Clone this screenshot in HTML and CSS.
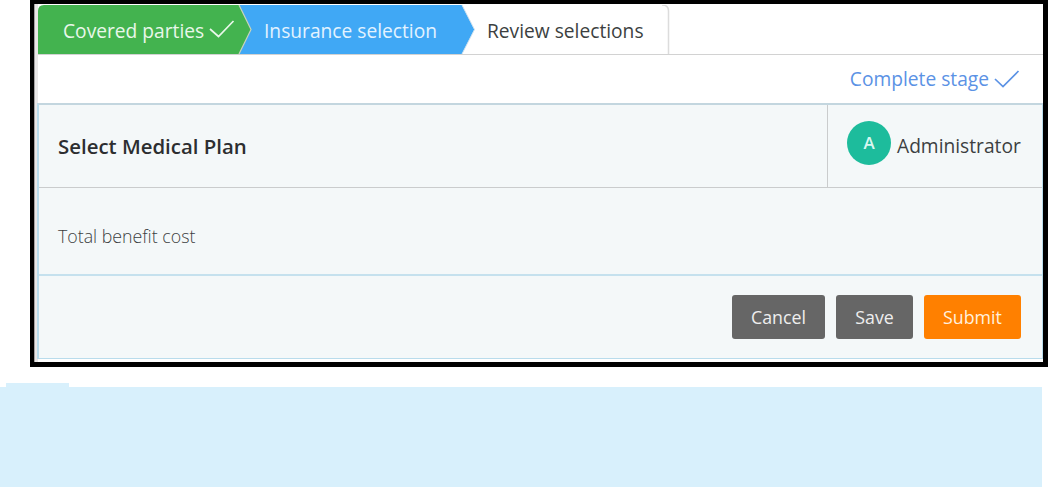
FILE: index.html
```html
<!DOCTYPE html>
<html lang="en">
<head>
    <meta charset="UTF-8">
    <meta name="viewport" content="width=device-width, initial-scale=1.0">
    <title>Select Medical Plan</title>
    <link rel="stylesheet" href="styles.css">
</head>
<body>
    <div class="case">
        <div class="stages">
            <svg class="stages-bg" width="1004" height="49" viewBox="0 0 1004 49">
                <path d="M200 0H424L436.500 24.500L424 49H200Z" fill="#40a8f5"/>
                <path d="M0 49V6Q0 0 6 0H201L213 24.500L201 49Z" fill="#43b34f"/>
                <path d="M201 0L213 24.500L201 49" fill="none" stroke="#c9d3bb" stroke-width="1.200"/>
                <path d="M424 0L436.500 24.500L424 49" fill="none" stroke="#d5e4ee" stroke-width="1"/>
                <path d="M624 0Q630.500 0 630.500 6V49" fill="none" stroke="#dcdcdc" stroke-width="1.500"/>
            </svg>
            <div class="stage stage-done">
                <span>Covered parties</span>
                <svg class="check" width="26" height="18" viewBox="0 0 26 18"><path d="M1 9L9.500 16.500L24.500 1"/></svg>
            </div>
            <div class="stage stage-current">Insurance selection</div>
            <div class="stage stage-next">Review selections</div>
        </div>
        <div class="complete">
            <span>Complete stage</span>
            <svg class="check" width="26" height="18" viewBox="0 0 26 18"><path d="M1 9L9 16.500L24.500 1"/></svg>
        </div>
        <div class="panel">
            <div class="panel-header">
                <h2 class="title">Select Medical Plan</h2>
                <div class="user">
                    <div class="avatar">A</div>
                    <span class="user-name">Administrator</span>
                </div>
            </div>
            <div class="panel-body">Total benefit cost</div>
            <div class="panel-footer">
                <button class="btn btn-cancel">Cancel</button>
                <button class="btn btn-save">Save</button>
                <button class="btn btn-submit">Submit</button>
            </div>
        </div>
    </div>
    <div class="note-tab"></div>
    <div class="note"></div>
</body>
</html>
```
FILE: styles.css
```css
* {
    margin: 0;
    padding: 0;
    box-sizing: border-box;
}

html, body {
    height: 100%;
    overflow: hidden;
}

body {
    background: #fff;
    color: #3c3f41;
    font-family: "Open Sans", "Noto Sans", sans-serif;
    font-size: 19.2px;
}

.case {
    width: 1018px;
    height: 367px;
    margin-left: 30px;
    border: solid #000;
    border-width: 4px 5px 5px 4px;
    padding: 1px 0 0 4px;
    background: linear-gradient(to right, #a5a3a3 1px, #e9e7e7 1px, #e9e7e7 4px, #fff 4px);
}

.stages {
    position: relative;
    display: flex;
    height: 50px;
    border-bottom: 1px solid #d2d2d2;
    line-height: 52px;
    white-space: nowrap;
}

.stages-bg {
    position: absolute;
    top: 0;
    left: 0;
}

.stage {
    position: relative;
}

.stage-done {
    display: flex;
    width: 201px;
    padding-left: 25px;
    color: #e9f7ea;
}

.stage-current {
    width: 223px;
    padding-left: 25px;
    color: #e3f3ff;
}

.stage-next {
    padding-left: 25px;
}

.check {
    flex-shrink: 0;
    fill: none;
    stroke: currentColor;
    stroke-width: 1.7;
}

.stage-done .check {
    margin: 15px 0 0 5px;
}

.complete {
    display: flex;
    justify-content: flex-end;
    height: 48px;
    padding-right: 23px;
    line-height: 47px;
    color: #5b92e5;
}

.complete .check {
    margin: 15px 0 0 5px;
}

.panel {
    margin-left: -1px;
    height: 256px;
    border: 1px solid #b9dcec;
    border-left-width: 2px;
    border-top: 2px solid #c3d6df;
    background: #f4f8f9;
}

.panel-header {
    display: flex;
    justify-content: space-between;
    height: 83px;
    border-bottom: 1px solid #cacccd;
}

.title {
    padding-left: 19px;
    font-size: 20.4px;
    font-weight: 600;
    line-height: 83px;
    color: #2c2e30;
}

.user {
    display: flex;
    width: 215px;
    padding-left: 19px;
    border-left: 1px solid #cacccd;
}

.avatar {
    width: 44px;
    height: 44px;
    margin-top: 16px;
    border-radius: 50%;
    background: #1dbc9c;
    color: #d8f7f0;
    font-size: 17px;
    font-weight: 600;
    line-height: 44px;
    text-align: center;
}

.user-name {
    margin-left: 6px;
    line-height: 82px;
}

.panel-body {
    height: 88px;
    padding-left: 19px;
    border-bottom: 2px solid #c5e1ee;
    font-size: 17.8px;
    font-weight: 300;
    line-height: 97px;
}

.panel-footer {
    display: flex;
    justify-content: flex-end;
    gap: 11px;
    padding: 19px 21px 0 0;
}

.btn {
    height: 44px;
    border: 0;
    border-radius: 3px;
    background: #666;
    color: #eee;
    font-family: inherit;
    font-size: 17.8px;
    line-height: 44px;
}

.btn-cancel {
    width: 93px;
}

.btn-save {
    width: 77px;
}

.btn-submit {
    width: 97px;
    background: #ff8000;
    color: #fff0df;
}

.note-tab {
    width: 63px;
    height: 4px;
    margin: 16px 0 0 6px;
    background: #d8f0fc;
}

.note {
    width: 1042px;
    height: 100px;
    background: #d8f0fc;
}
```
